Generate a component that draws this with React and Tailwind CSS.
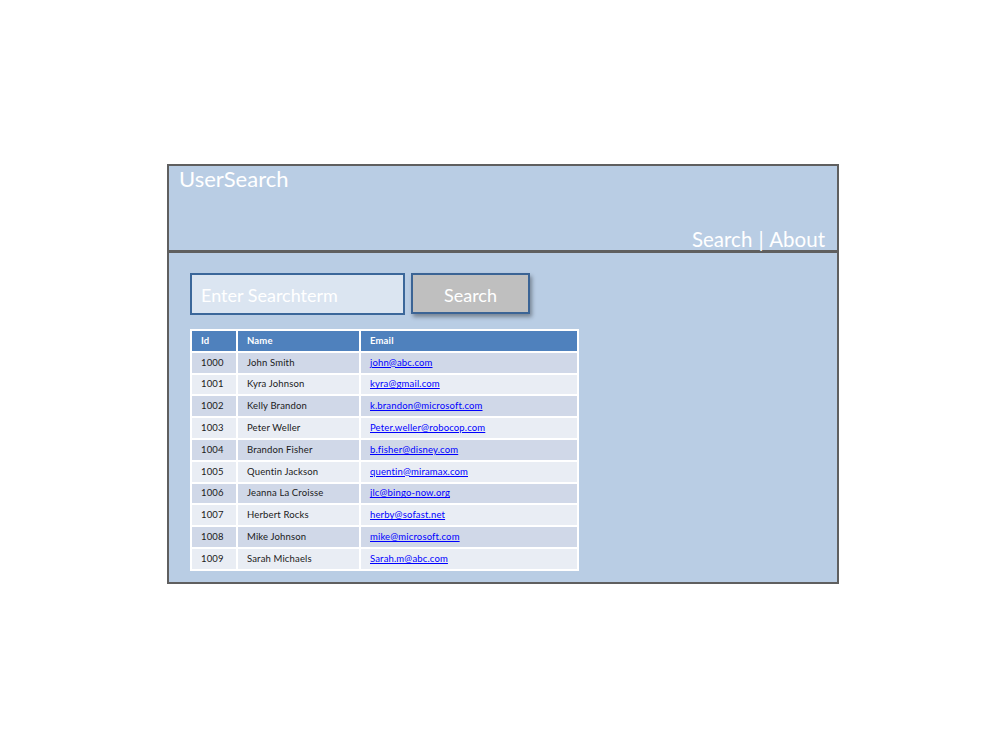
import React from 'react'

const users = [
  { id: 1000, name: 'John Smith', email: 'john@abc.com' },
  { id: 1001, name: 'Kyra Johnson', email: 'kyra@gmail.com' },
  { id: 1002, name: 'Kelly Brandon', email: 'k.brandon@microsoft.com' },
  { id: 1003, name: 'Peter Weller', email: 'Peter.weller@robocop.com' },
  { id: 1004, name: 'Brandon Fisher', email: 'b.fisher@disney.com' },
  { id: 1005, name: 'Quentin Jackson', email: 'quentin@miramax.com' },
  { id: 1006, name: 'Jeanna La Croisse', email: 'jlc@bingo-now.org' },
  { id: 1007, name: 'Herbert Rocks', email: 'herby@sofast.net' },
  { id: 1008, name: 'Mike Johnson', email: 'mike@microsoft.com' },
  { id: 1009, name: 'Sarah Michaels', email: 'Sarah.m@abc.com' },
]

export default function App() {
  return (
    <div className="w-[1000px] h-[750px] bg-white pt-[164px] pl-[167px] font-['Lato','Liberation_Sans',sans-serif]">
      <div className="w-[672px] h-[420px] border-2 border-[#5f5f5f] bg-[#b9cde4] flex flex-col">
        {/* header */}
        <div className="h-[87px] border-b-[3px] border-[#5f5f5f] flex flex-col justify-between px-[10px]">
          <div className="text-white text-[22px] leading-[28px] -mt-[1px]">UserSearch</div>
          <div className="self-end text-white text-[20.5px] leading-[24px] pr-[2px] -mb-[1px]">
            Search <span className="mx-[1px]">|</span> About
          </div>
        </div>

        {/* body */}
        <div className="pl-[21px] pt-[20px]">
          <div className="flex items-start gap-[6px]">
            <div className="w-[215px] h-[42px] border-2 border-[#3b679a] bg-[#dbe5f1] flex items-center pl-[9px] pt-[2px] text-[18px] text-white">
              Enter Searchterm
            </div>
            <button className="w-[119px] h-[41px] bg-[#bfbfbf] border-2 border-[#3b6495] shadow-[2px_3px_4px_rgba(0,0,0,0.35)] text-white text-[18px] pt-[3px]">
              Search
            </button>
          </div>

          <table className="mt-[14px] w-[389px] border-collapse text-[9.5px] text-[#1a1a1a] tracking-[0.15px]">
            <thead>
              <tr className="bg-[#4f81bd] text-white font-bold h-[21.8px]">
                <th className="w-[46px] border-2 border-white text-left pl-[9px] pt-[1px]">Id</th>
                <th className="w-[123px] border-2 border-white text-left pl-[9px] pt-[1px]">Name</th>
                <th className="border-2 border-white text-left pl-[9px] pt-[1px]">Email</th>
              </tr>
            </thead>
            <tbody>
              {users.map((u, i) => (
                <tr key={u.id} className={`h-[21.8px] ${i % 2 === 0 ? 'bg-[#d0d8e8]' : 'bg-[#e9edf4]'}`}>
                  <td className="border-2 border-white pl-[9px]">{u.id}</td>
                  <td className="border-2 border-white pl-[9px]">{u.name}</td>
                  <td className="border-2 border-white pl-[9px]">
                    <a href="#" className="text-[#0000ff] underline">{u.email}</a>
                  </td>
                </tr>
              ))}
            </tbody>
          </table>
        </div>
      </div>
    </div>
  )
}
